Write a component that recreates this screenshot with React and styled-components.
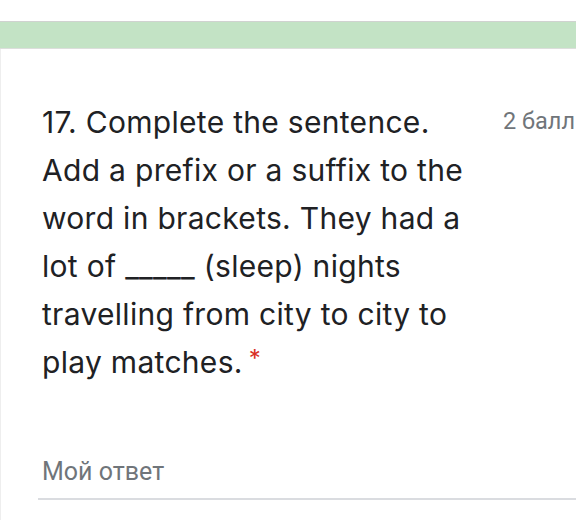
import React from "react";
import styled, { createGlobalStyle } from "styled-components";

const GlobalStyle = createGlobalStyle`
  html, body {
    margin: 0;
    padding: 0;
    background: #fff;
  }
  body {
    width: 576px;
    height: 520px;
    overflow: hidden;
  }
`;

const Page = styled.div`
  width: 576px;
  height: 520px;
  display: flex;
  flex-direction: column;
  padding-top: 21px;
  box-sizing: border-box;
  overflow: hidden;
`;

const Banner = styled.div`
  height: 26px;
  background: #c3e3c5;
  border-top: 1px solid #d0d2d0;
  border-bottom: 1px solid #dcdedc;
`;

const Card = styled.div`
  flex: 1;
  display: flex;
  flex-direction: column;
  padding: 49px 0 0 41px;
  border-left: 1px solid #eeeeee;
`;

const Header = styled.div`
  display: flex;
  align-items: flex-start;
  gap: 20px;
`;

const Question = styled.div`
  width: 441px;
  flex-shrink: 0;
  white-space: nowrap;
  font-family: Inter, "Open Sans", sans-serif;
  font-size: 30px;
  line-height: 48px;
  color: #202124;
  letter-spacing: 0.3px;
`;

const Required = styled.span`
  color: #d93025;
  font-size: 24px;
  line-height: 0;
  margin-left: 6px;
  vertical-align: 6px;
`;

const Points = styled.div`
  flex: 1;
  white-space: nowrap;
  margin-top: 10px;
  font-family: Roboto, sans-serif;
  font-size: 23.5px;
  line-height: 26px;
  color: #70757a;
`;

const Answer = styled.div`
  margin-top: 69px;
  height: 43px;
  margin-left: -4px;
  padding-left: 4px;
  font-family: Roboto, sans-serif;
  font-size: 25px;
  line-height: 34px;
  color: #70757a;
  border-bottom: 2px solid #dadce0;
`;

export default function App() {
  return (
    <>
      <GlobalStyle />
      <Page>
        <Banner />
        <Card>
          <Header>
            <Question>
              17. Complete the sentence.
              <br />
              Add a prefix or a suffix to the
              <br />
              word in brackets. They had a
              <br />
              lot of _____ (sleep) nights
              <br />
              travelling from city to city to
              <br />
              play matches.<Required>*</Required>
            </Question>
            <Points>2 балл</Points>
          </Header>
          <Answer>Мой ответ</Answer>
        </Card>
      </Page>
    </>
  );
}
